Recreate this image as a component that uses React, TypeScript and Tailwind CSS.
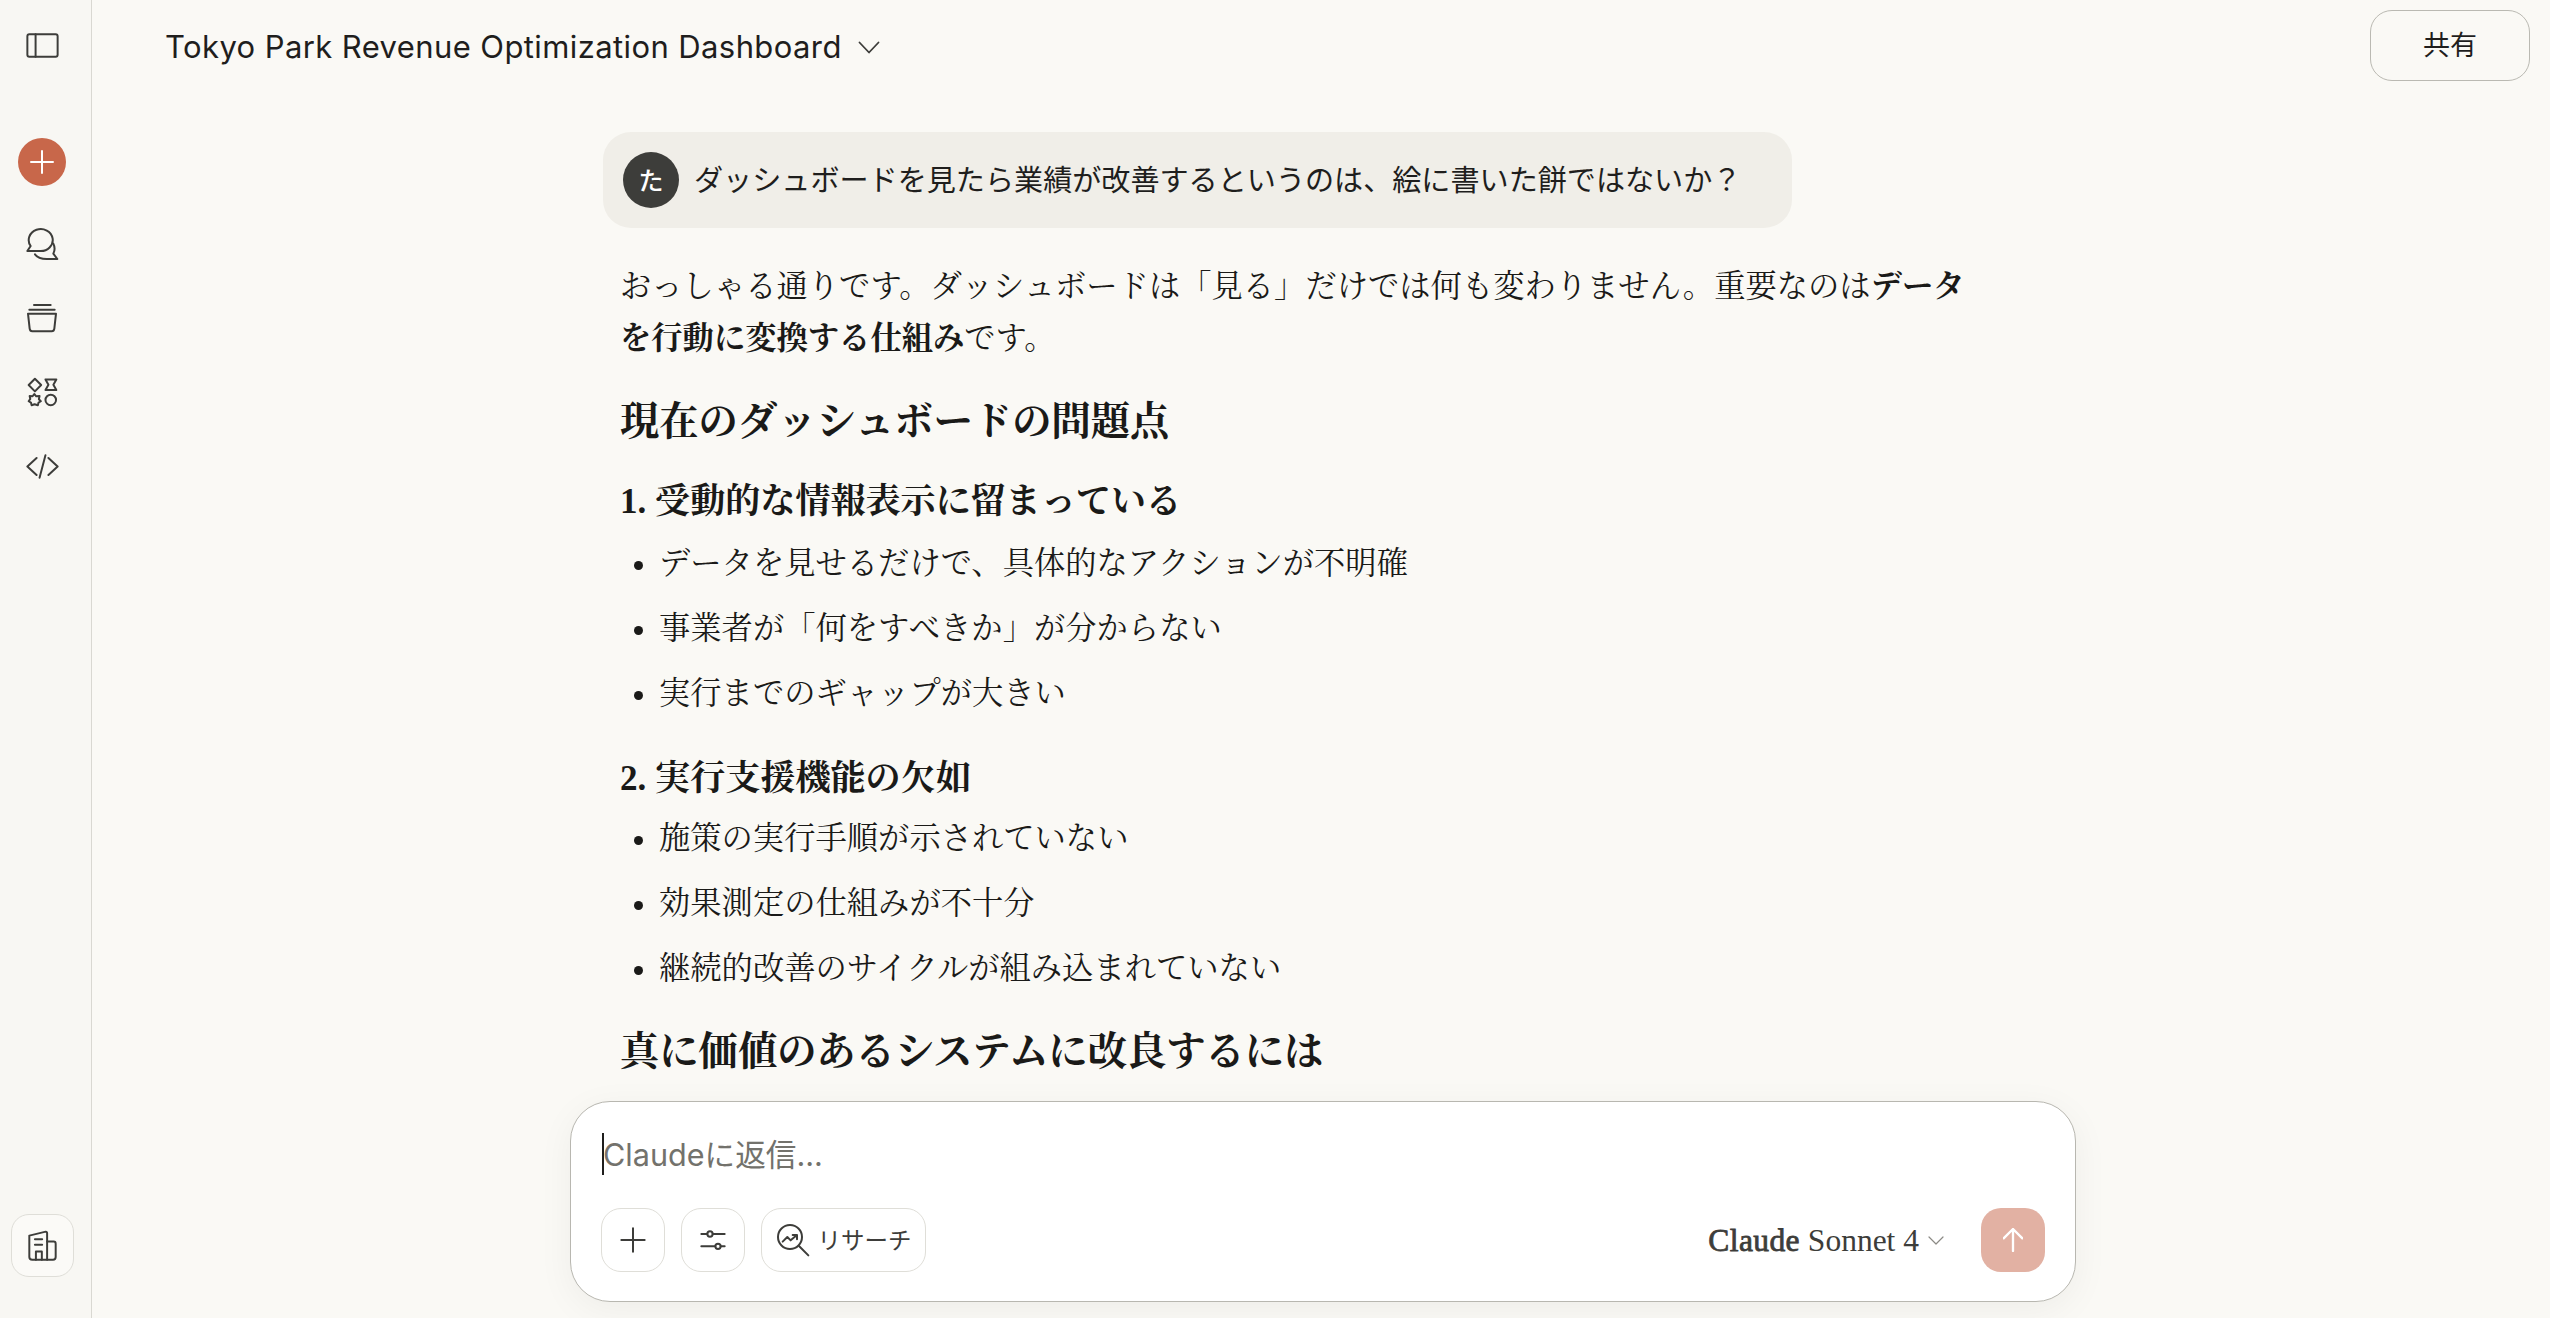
import React from "react";

const serif = "font-['Liberation_Serif','Noto_Serif_CJK_JP','Noto_Sans_CJK_JP',serif]";

function Icon({ box, w, h, children, color = "#3d3d3a", sw = 6 }: { box: string; w: number; h: number; children: React.ReactNode; color?: string; sw?: number }) {
  return (
    <svg viewBox={box} width={w} height={h} fill="none" stroke={color} strokeWidth={sw} strokeLinecap="round" strokeLinejoin="round" className="block shrink-0">
      {children}
    </svg>
  );
}

function NavSlot({ children }: { children: React.ReactNode }) {
  return <div className="flex h-[74px] w-full items-center justify-center">{children}</div>;
}

function Sidebar() {
  return (
    <aside className="flex h-full w-[92px] shrink-0 flex-col items-center border-r border-[#d9d8d2] bg-[#f8f7f3] pb-[41px] pr-[7px]">
      <div className="flex h-[91px] w-full items-center justify-center">
        <Icon box="76 100 100 76" w={33} h={25}>
          <rect x="80" y="104" width="92" height="68" rx="6" />
          <path d="M105 104V172" />
        </Icon>
      </div>
      <div className="mt-[47px] flex h-[48px] w-[48px] items-center justify-center rounded-full bg-[#c8674a]">
        <svg viewBox="0 0 24 24" width="24" height="24" fill="none" stroke="#fff" strokeWidth="2" strokeLinecap="round"><path d="M12 1V23M1 12H23" /></svg>
      </div>
      <div className="mt-[21px] w-full">
        <NavSlot>
          <Icon box="75 680 102 102" w={34} h={34}>
            <path d="M120 752H82L92 737A36 33 0 1 1 120 752" />
            <path d="M105 762C115 776 130 776 140 776H172L160 760C165 750 165 740 160 730" />
          </Icon>
        </NavSlot>
        <NavSlot>
          <Icon box="78 908 96 90" w={32} h={30}>
            <path d="M102 914H152M88 928H164" />
            <path d="M84 940H168L163 985Q162 993 155 993H97Q90 993 89 985Z" />
          </Icon>
        </NavSlot>
        <NavSlot>
          <Icon box="78 1132 94 90" w={31} h={30}>
            <path d="M102 1137L121 1156L102 1175L83 1156Z" />
            <path d="M134 1139H167L158 1155L167 1171H134L143 1155Z" />
            <path d="M100 1183L106 1190L116 1189L114 1199L120 1205L113 1209L111 1217L101 1214L92 1217L90 1209L83 1205L88 1198L86 1189L95 1190Z" />
            <circle cx="150" cy="1201" r="16" />
          </Icon>
        </NavSlot>
        <NavSlot>
          <Icon box="76 1360 100 76" w={33} h={25}>
            <path d="M108 1372L80 1398L108 1424M144 1372L172 1398L144 1424M135 1364L117 1432" />
          </Icon>
        </NavSlot>
      </div>
      <div className="mt-auto flex h-[63px] w-[63px] items-center justify-center rounded-[18px] border border-[#dfded8] bg-[#fbfaf7]">
        <Icon box="82 148 88 94" w={29} h={31} sw={6}>
          <path d="M86 165L136 153Q140 153 140 158V238H95Q86 238 86 230Z" />
          <path d="M140 183H160Q166 183 166 190V230Q166 238 158 238H140" />
          <path d="M103 176H125M103 193H125M106 238V213H124V238" />
        </Icon>
      </div>
    </aside>
  );
}

function Header() {
  return (
    <header className="flex h-[94px] shrink-0 items-center justify-between pl-[73px] pr-[20px]">
      <div className="flex items-center gap-[16px]">
        <h1 className="font-['Inter',sans-serif] text-[31px] font-normal tracking-[0.4px] text-[#1f1e1d]">Tokyo Park Revenue Optimization Dashboard</h1>
        <Icon box="0 0 22 13" w={22} h={13} color="#3d3d3a" sw={1.8}><path d="M1.5 1.5L11 11.5L20.5 1.5" /></Icon>
      </div>
      <button className="mb-[3px] flex h-[71px] w-[160px] items-center justify-center rounded-[22px] border border-[#bab9b2] pb-[3px] font-['Noto_Sans_CJK_JP',sans-serif] text-[27px] text-[#1f1e1d]">共有</button>
    </header>
  );
}

function Bullets({ items }: { items: string[] }) {
  return (
    <ul className="flex list-disc flex-col gap-[13px] pl-[39px]">
      {items.map((t) => (
        <li key={t} className="leading-[52px]">{t}</li>
      ))}
    </ul>
  );
}

function Conversation() {
  return (
    <div className="min-h-0 flex-1 overflow-hidden pt-[38px]">
      <div className="ml-[511px] w-[1189px]">
        <div className="flex h-[96px] w-full items-center gap-[15px] rounded-[28px] bg-[#f0eee8] pl-[20px]">
          <div className="flex h-[56px] w-[56px] shrink-0 items-center justify-center rounded-full bg-[#3d3d3a] font-['Noto_Sans_CJK_JP',sans-serif] text-[25px] font-medium text-white">た</div>
          <p className="pb-[3px] font-['Noto_Sans_CJK_JP',sans-serif] text-[29.1px] text-[#1f1e1d]">ダッシュボードを見たら業績が改善するというのは、絵に書いた餅ではないか？</p>
        </div>
      </div>
      <div className={`ml-[528px] w-[1360px] pt-[33px] text-[31.3px] text-[#1a1a18] ${serif}`}>
        <p className="leading-[52px]">おっしゃる通りです。ダッシュボードは「見る」だけでは何も変わりません。重要なのは<strong className="font-bold">データを行動に変換する仕組み</strong>です。</p>
        <h2 className="mt-[29px] text-[39.3px] font-bold leading-[56px]">現在のダッシュボードの問題点</h2>
        <h3 className="mt-[27px] text-[35.1px] font-bold leading-[50px]">1. 受動的な情報表示に留まっている</h3>
        <div className="mt-[11px]">
          <Bullets items={["データを見せるだけで、具体的なアクションが不明確", "事業者が「何をすべきか」が分からない", "実行までのギャップが大きい"]} />
        </div>
        <h3 className="mt-[34px] text-[35.1px] font-bold leading-[50px]">2. 実行支援機能の欠如</h3>
        <div className="mt-[9px]">
          <Bullets items={["施策の実行手順が示されていない", "効果測定の仕組みが不十分", "継続的改善のサイクルが組み込まれていない"]} />
        </div>
        <h2 className="mt-[29px] text-[39.3px] font-bold leading-[56px]">真に価値のあるシステムに改良するには</h2>
      </div>
    </div>
  );
}

function ToolButton({ children, wide }: { children: React.ReactNode; wide?: boolean }) {
  return (
    <button className={`flex h-[64px] items-center justify-center rounded-[20px] border border-[#dfded8] ${wide ? "w-[165px] gap-[8px]" : "w-[64px]"}`}>
      {children}
    </button>
  );
}

function Composer() {
  return (
    <div className="relative z-10 mb-[16px] ml-[478px] h-[201px] w-[1506px] shrink-0 rounded-[40px] border border-[#b8b7b0] bg-white pl-[30px] pr-[29px] pt-[31px] shadow-[0_8px_36px_rgba(0,0,0,0.05)]">
      <div className="ml-[1px] flex h-[42px] items-center">
        <span className="h-[42px] w-[2px] bg-[#1f1e1d]" />
        <span className="-ml-[1px] pt-[1px] font-['Inter','Noto_Sans_CJK_JP',sans-serif] text-[30.6px] text-[#73726c]">Claudeに返信...</span>
      </div>
      <div className="mt-[33px] flex items-center">
        <div className="flex items-center gap-[16px]">
          <ToolButton>
            <Icon box="180 412 78 78" w={26} h={26} sw={6}><path d="M219 416V486M184 451H254" /></Icon>
          </ToolButton>
          <ToolButton>
            <Icon box="420 416 78 66" w={26} h={22} sw={6}>
              <path d="M424 431H442M458 431H494M424 468H466M482 468H494" />
              <circle cx="450" cy="431" r="8" />
              <circle cx="474" cy="468" r="8" />
            </Icon>
          </ToolButton>
          <ToolButton wide>
            <Icon box="648 398 102 102" w={34} h={34} sw={6}>
              <circle cx="690" cy="440" r="36" />
              <path d="M717 467L745 495M668 454L682 440L692 450L710 435M698 434H711V447" />
            </Icon>
            <span className="font-['Noto_Sans_CJK_JP',sans-serif] text-[23.5px] text-[#3d3d3a]">リサーチ</span>
          </ToolButton>
        </div>
        <div className="ml-auto flex items-center">
          <span className="pt-[1px] font-['Liberation_Serif',serif] text-[31.5px] text-[#3d3d3a]"><span className="tracking-[0.4px] [-webkit-text-stroke:0.8px_#3d3d3a]">Claude</span> Sonnet 4</span>
          <span className="ml-[9px]">
            <Icon box="0 0 16 9" w={16} h={9} color="#8b8a85" sw={1.2}><path d="M1 1L8 8L15 1" /></Icon>
          </span>
          <button className="ml-[37px] mr-[1px] flex h-[64px] w-[64px] items-center justify-center rounded-[20px] bg-[#e2b1a3]">
            <Icon box="1028 415 60 72" w={20} h={24} color="#ffffff" sw={7}><path d="M1058 484V418M1030 446L1058 418L1086 446" /></Icon>
          </button>
        </div>
      </div>
    </div>
  );
}

export default function App() {
  return (
    <div className="flex h-[1318px] w-[2550px] overflow-hidden bg-[#faf9f5]">
      <Sidebar />
      <main className="flex min-w-0 flex-1 flex-col">
        <Header />
        <Conversation />
        <Composer />
      </main>
    </div>
  );
}
